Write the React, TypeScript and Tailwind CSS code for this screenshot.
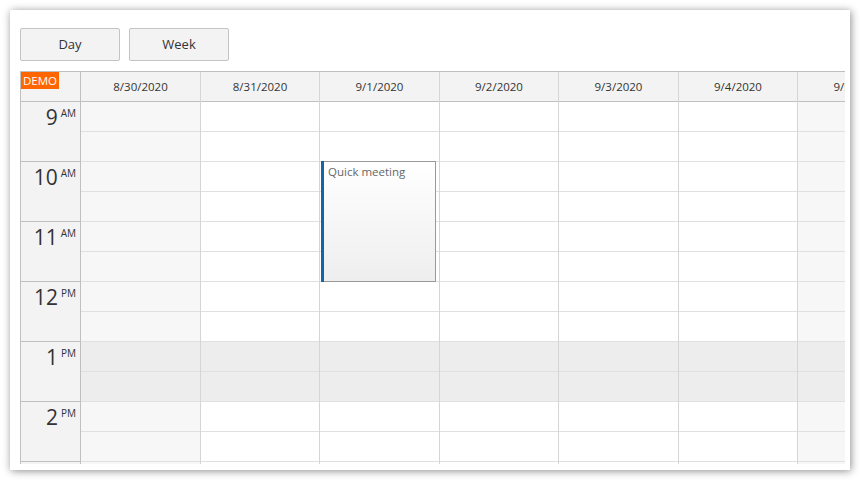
import React from "react";

const days = [
  { label: "8/30/2020", w: "w-[120px]", off: true },
  { label: "8/31/2020", w: "w-[119px]", off: false },
  { label: "9/1/2020", w: "w-[120px]", off: false },
  { label: "9/2/2020", w: "w-[119px]", off: false },
  { label: "9/3/2020", w: "w-[120px]", off: false },
  { label: "9/4/2020", w: "w-[119px]", off: false },
  { label: "9/5/2020", w: "w-[120px]", off: true },
];

const hours = [
  { h: "9", ap: "AM" },
  { h: "10", ap: "AM" },
  { h: "11", ap: "AM" },
  { h: "12", ap: "PM" },
  { h: "1", ap: "PM", lunch: true },
  { h: "2", ap: "PM" },
  { h: "", ap: "" },
];

function Cell({ bg }: { bg: string }) {
  return <div className={`h-[30px] border-b border-[#e0e0e0] ${bg}`} />;
}

export default function App() {
  return (
    <div
      className="w-[860px] h-[480px] bg-white p-[10px]"
      style={{ fontFamily: '"Open Sans", "Noto Sans", sans-serif' }}
    >
      <div className="w-[840px] h-[460px] bg-white shadow-[1px_1px_8px_rgba(0,0,0,0.45)] pl-[10px] pr-[5px] pt-[18px] flex flex-col">
        {/* toolbar */}
        <div className="flex gap-[9px]">
          <button className="w-[100px] h-[33px] bg-[#f3f3f3] border border-[#c4c4c4] rounded-[2px] text-[13px] text-[#333]">
            Day
          </button>
          <button className="w-[100px] h-[33px] bg-[#f3f3f3] border border-[#c4c4c4] rounded-[2px] text-[13px] text-[#333]">
            Week
          </button>
        </div>

        {/* calendar */}
        <div className="mt-[10px] h-[393px] overflow-hidden border-t border-l border-[#c0c0c0] flex">
          {/* row headers */}
          <div className="w-[60px] shrink-0 border-r border-[#c0c0c0] bg-[#f3f3f3]">
            <div className="h-[30px] border-b border-[#c0c0c0] relative">
              <span className="absolute left-0 top-0 bg-[#ff6600] text-white text-[11.5px] leading-[17px] px-[2px]">
                DEMO
              </span>
            </div>
            {hours.map((r, i) => (
              <div
                key={i}
                className="h-[60px] border-b border-[#c0c0c0] flex justify-end pr-[4px] pt-[2px] text-[#333]"
              >
                <span className="text-[21px] leading-[26px]">{r.h}</span>
                <span className="text-[10px] leading-[12px] ml-[3px] mt-[3px]">{r.ap}</span>
              </div>
            ))}
          </div>

          {/* day columns */}
          <div className="flex shrink-0">
            {days.map((d, i) => (
              <div key={d.label} className={`${d.w} shrink-0 border-r border-[#d5d5d5] relative`}>
                <div className="h-[30px] bg-[#f3f3f3] border-b border-[#c0c0c0] flex items-center justify-center text-[11.5px] text-[#333] whitespace-nowrap">
                  {d.label}
                </div>
                {hours.map((r, k) => {
                  const bg = r.lunch ? "bg-[#ededed]" : d.off ? "bg-[#f7f7f7]" : "bg-white";
                  return (
                    <div key={k}>
                      <Cell bg={bg} />
                      <Cell bg={bg} />
                    </div>
                  );
                })}
                {i === 2 && (
                  <div className="absolute left-[1px] top-[89px] w-[115px] h-[121px] border border-[#999] bg-gradient-to-b from-white to-[#eeeeee] flex">
                    <div className="w-[3px] bg-[#1066a8] -ml-px -my-px" />
                    <div className="pl-[4px] pt-[1px] text-[11.5px] text-[#666]">Quick meeting</div>
                  </div>
                )}
              </div>
            ))}
          </div>
        </div>
      </div>
    </div>
  );
}
